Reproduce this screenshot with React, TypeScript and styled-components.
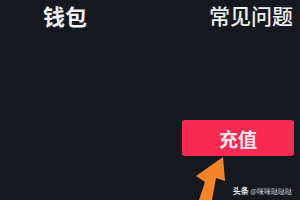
import React from 'react';
import styled, { createGlobalStyle } from 'styled-components';

const GlobalStyle = createGlobalStyle`
  html, body {
    margin: 0;
    padding: 0;
    background: #161820;
  }
  body {
    font-family: "Noto Sans CJK SC", "Noto Sans", sans-serif;
  }
`;

function App() {
  return (
    <>
      <GlobalStyle />
      <Screen>
        <Header>
          <Title>钱包</Title>
          <Title $small>常见问题</Title>
        </Header>
        <ButtonRow>
          <ChargeButton>充值</ChargeButton>
        </ButtonRow>
        <Footer>
          <Mark>
            <b>头条</b> @咪咪哒哒哒
          </Mark>
        </Footer>
        <Arrow viewBox="0 0 300 200" width={300} height={200}>
          <polygon points="223,157 225,181 216,178 212,200 199,200 205,182 196,176" fill="#f5832a" />
        </Arrow>
      </Screen>
    </>
  );
}

export default App;

const Screen = styled.div`
  position: relative;
  width: 300px;
  height: 200px;
  overflow: hidden;
  background: #161820;
  display: flex;
  flex-direction: column;
`;

const Header = styled.div`
  display: flex;
  justify-content: space-between;
  align-items: center;
  padding: 0 7px 0 43px;
  height: 30px;
`;

const Title = styled.span<{ $small?: boolean }>`
  color: #f2f2f2;
  font-size: ${({ $small }) => ($small ? '21px' : '22px')};
  font-weight: ${({ $small }) => ($small ? 500 : 700)};
  line-height: 1;
`;

const ButtonRow = styled.div`
  display: flex;
  justify-content: flex-end;
  padding: 90px 6px 0 0;
`;

const ChargeButton = styled.button`
  width: 112px;
  height: 36px;
  border: none;
  border-radius: 3px;
  background: #f72a52;
  color: #fde3e8;
  font-family: "Noto Sans CJK SC", sans-serif;
  font-size: 19px;
  font-weight: 700;
  padding: 0;
`;

const Footer = styled.div`
  display: flex;
  justify-content: flex-end;
  padding: 30px 8px 0 0;
`;

const Mark = styled.span`
  color: #d0d0d6;
  font-size: 7px;
  line-height: 9px;
  & b {
    font-size: 8px;
    color: #eee;
  }
`;

const Arrow = styled.svg`
  position: absolute;
  left: 0;
  top: 0;
  pointer-events: none;
`;
